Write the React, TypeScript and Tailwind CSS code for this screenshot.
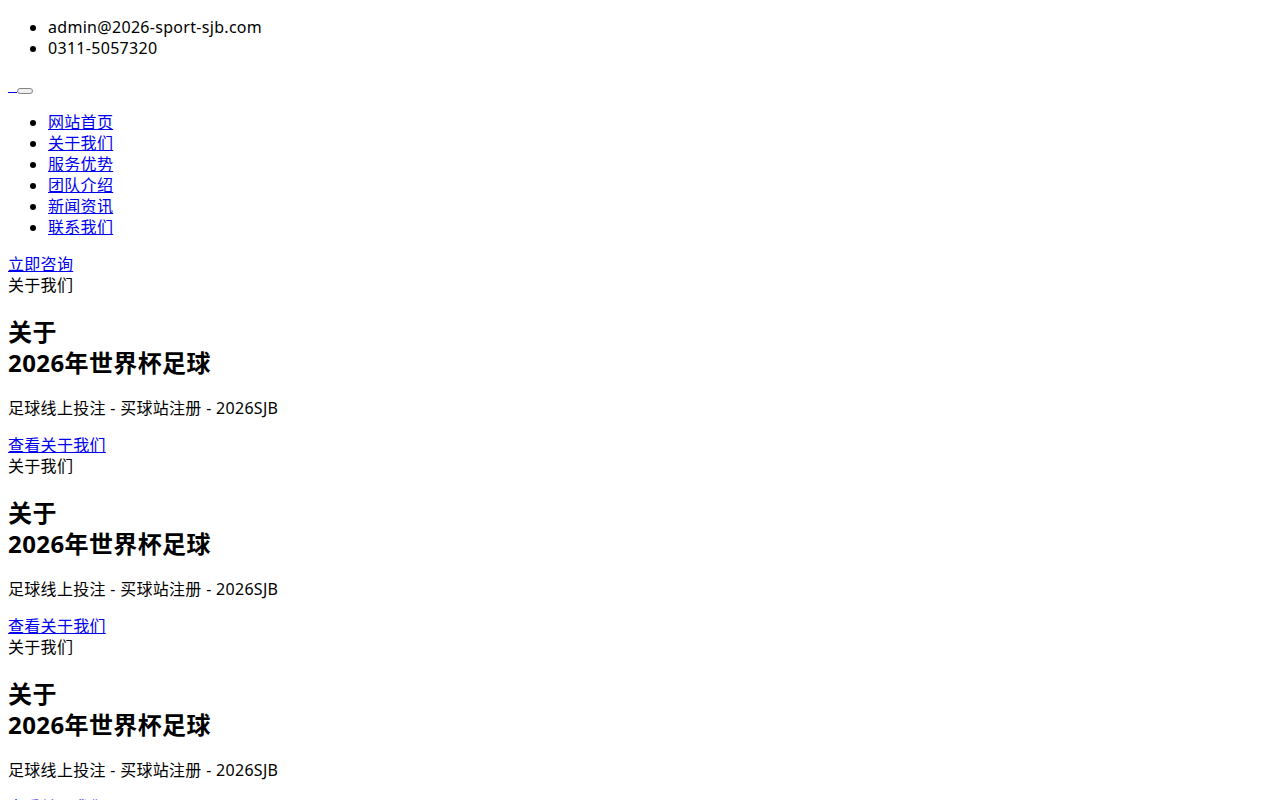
import React from "react";

const link = "text-[#0000ee] underline";

function Section() {
  return (
    <>
      <div className="leading-[21px]">关于我们</div>
      <h2 className="text-[24px] font-bold leading-[31px] my-[20px] tracking-[0.4px]">
        关于
        <br />
        2026年世界杯足球
      </h2>
      <p className="my-4 leading-[21px]">足球线上投注 - 买球站注册 - 2026SJB</p>
      <a href="#" className={`${link} block leading-[21px]`}>
        查看关于我们
      </a>
    </>
  );
}

export default function App() {
  return (
    <div
      className="bg-white text-black text-[16px] leading-[21px] tracking-[0.3px] p-2 pt-0 min-h-[800px] overflow-hidden"
      style={{ fontFamily: '"Noto Sans", "Noto Sans CJK SC", sans-serif' }}
    >
      <ul className="list-disc pl-10 mt-[17px] mb-[15px]">
        <li>admin@2026-sport-sjb.com</li>
        <li>0311-5057320</li>
      </ul>
      <div className="h-[22px] flex items-end pb-[1px]">
        <span className="inline-block w-[9px] border-b border-[#0000ee] mb-[2px]" />
        <button className="inline-block w-4 h-[6px] bg-[#efefef] border border-[#858585] rounded-[3px] mb-[1px]" />
      </div>
      <ul className="list-disc pl-10 my-4">
        <li><a href="#" className={link}>网站首页</a></li>
        <li><a href="#" className={link}>关于我们</a></li>
        <li><a href="#" className={link}>服务优势</a></li>
        <li><a href="#" className={link}>团队介绍</a></li>
        <li><a href="#" className={link}>新闻资讯</a></li>
        <li><a href="#" className={link}>联系我们</a></li>
      </ul>
      <a href="#" className={`${link} block`}>立即咨询</a>
      <Section />
      <Section />
      <Section />
    </div>
  );
}
